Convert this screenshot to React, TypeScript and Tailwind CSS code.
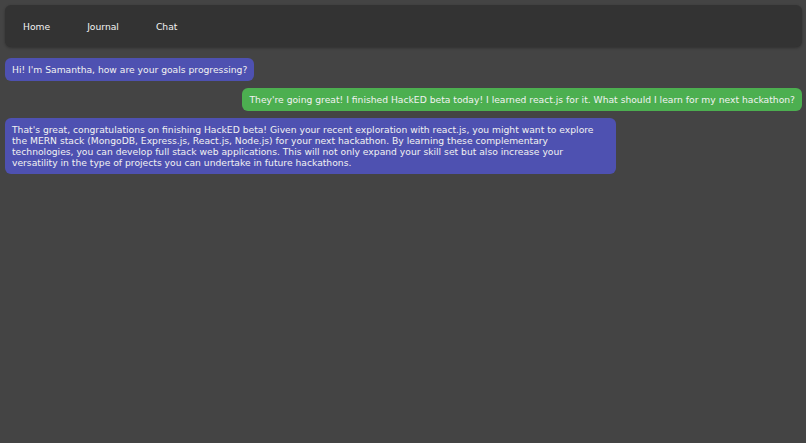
const messages = [
  {
    from: 'bot',
    text: "Hi! I'm Samantha, how are your goals progressing?",
  },
  {
    from: 'user',
    text: "They're going great! I finished HackED beta today! I learned react.js for it. What should I learn for my next hackathon?",
  },
  {
    from: 'bot',
    text: "That's great, congratulations on finishing HackED beta! Given your recent exploration with react.js, you might want to explore the MERN stack (MongoDB, Express.js, React.js, Node.js) for your next hackathon. By learning these complementary technologies, you can develop full stack web applications. This will not only expand your skill set but also increase your versatility in the type of projects you can undertake in future hackathons.",
  },
];

export default function App() {
  return (
    <div
      className="min-h-[443px] bg-[#444444] pt-[5px] pr-[4px] pl-[5px] text-[#f2f2f2]"
      style={{ fontFamily: '"DejaVu Sans", sans-serif' }}
    >
      <nav className="flex h-[42px] items-center gap-[37px] rounded-[6px] bg-[#333333] pt-[2px] pl-[18px] text-[9.2px] shadow-[0_1px_3px_rgba(0,0,0,0.3)]">
        <a>Home</a>
        <a>Journal</a>
        <a>Chat</a>
      </nav>

      <div className="mt-[11px] flex flex-col gap-[7px]">
        {messages.map((message, index) => (
          <div
            key={index}
            className={message.from === 'user' ? 'flex justify-end' : 'flex justify-start'}
          >
            <div
              className={
                'max-w-[611px] rounded-[6px] px-[7px] py-[6px] text-[9.2px] leading-[11px] ' +
                (message.from === 'user' ? 'bg-[#4caf50]' : 'bg-[#4e51b1]')
              }
            >
              {message.text}
            </div>
          </div>
        ))}
      </div>
    </div>
  );
}
